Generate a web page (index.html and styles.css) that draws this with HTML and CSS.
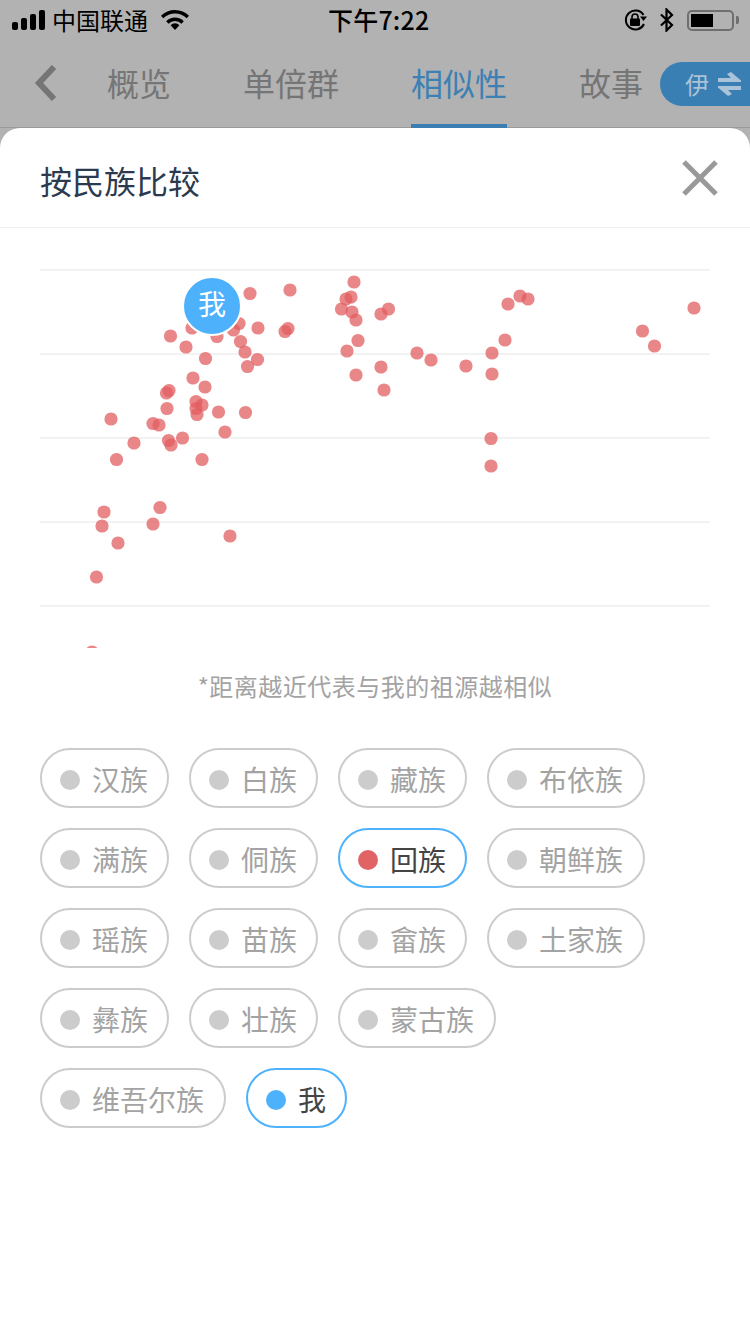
FILE: index.html
```html
<!DOCTYPE html>
<html lang="zh-CN">
<head>
    <meta charset="UTF-8">
    <title>相似性</title>
    <link rel="stylesheet" href="styles.css">
</head>
<body>
    <div class="page">
        <!-- Status bar -->
        <div class="status">
            <div class="status-left">
                <span class="signal"><i></i><i></i><i></i><i></i></span>
                <span class="carrier">中国联通</span>
                <svg class="wifi" width="28" height="20" viewBox="0 0 28 20">
                    <path d="M14 20 9.600 15.200a6.200 6.200 0 0 1 8.800 0Z"/>
                    <path d="M14 7.600c3.500 0 6.600 1.400 8.800 3.600l-2.300 2.500a9.200 9.200 0 0 0-13 0l-2.300-2.500A12.400 12.400 0 0 1 14 7.600Z"/>
                    <path d="M14 0c5.500 0 10.400 2.200 14 5.800l-2.300 2.500A16.600 16.600 0 0 0 14 3.400 16.600 16.600 0 0 0 2.300 8.300L0 5.800A19.800 19.800 0 0 1 14 0Z"/>
                </svg>
            </div>
            <div class="time">下午7:22</div>
            <div class="status-right">
                <svg class="lock" width="24" height="22" viewBox="0 0 24 22">
                    <path d="M19.500 6A9.500 9.500 0 1 0 20 15" fill="none" stroke="#000" stroke-width="2"/>
                    <path d="M16 7.500h7L19.500 12Z"/>
                    <rect x="6" y="9.500" width="10" height="7.500" rx="1"/>
                    <path d="M8 10V8a3 3 0 0 1 6 0v2" fill="none" stroke="#000" stroke-width="1.600"/>
                </svg>
                <svg class="bt" width="16" height="24" viewBox="0 0 16 24">
                    <path d="M2 6.500 13 17l-5.500 5.500v-21L13 7 2 17.500" fill="none" stroke="#000" stroke-width="2.200"/>
                </svg>
                <div class="battery"><span class="battery-fill"></span></div>
                <span class="battery-tip"></span>
            </div>
        </div>

        <!-- Tabs -->
        <div class="nav">
            <div class="back">
                <svg width="24" height="36" viewBox="0 0 24 36">
                    <path d="M20 2 5 18l15 16" fill="none" stroke="#757575" stroke-width="6"/>
                </svg>
            </div>
            <div class="tabs">
                <span class="tab">概览</span>
                <span class="tab">单倍群</span>
                <span class="tab active">相似性</span>
                <span class="tab">故事</span>
            </div>
            <div class="switch">
                <span>伊</span>
                <svg width="24" height="24" viewBox="0 0 24 24">
                    <path d="M0 6h13L9 2l4-2 10 8.500V10H0ZM23 14v4H10l4 4-4 2L0 15.500V14Z" fill="#aac3d8"/>
                </svg>
            </div>
        </div>

        <!-- Sheet -->
        <div class="sheet">
            <div class="sheet-head">
                <h1>按民族比较</h1>
                <svg class="close" width="38" height="38" viewBox="0 0 38 38">
                    <path d="M3 3l32 32M35 3 3 35" stroke="#999" stroke-width="5"/>
                </svg>
            </div>

            <div class="chart">
                <svg class="plot" width="750" height="420" viewBox="0 228 750 420">
                    <g class="grid">
                        <line x1="40" x2="710" y1="270" y2="270"/>
                        <line x1="40" x2="710" y1="354" y2="354"/>
                        <line x1="40" x2="710" y1="438" y2="438"/>
                        <line x1="40" x2="710" y1="522" y2="522"/>
                        <line x1="40" x2="710" y1="606" y2="606"/>
                    </g>
                    <g class="dots">
                        <circle cx="250" cy="293.500" r="6.600"/><circle cx="290" cy="290" r="6.600"/>
                        <circle cx="354" cy="282" r="6.600"/><circle cx="351" cy="297" r="6.600"/>
                        <circle cx="346" cy="299" r="6.600"/><circle cx="341.500" cy="309" r="6.600"/>
                        <circle cx="352" cy="312" r="6.600"/><circle cx="356" cy="320" r="6.600"/>
                        <circle cx="381" cy="314" r="6.600"/><circle cx="388.500" cy="309" r="6.600"/>
                        <circle cx="358" cy="340.500" r="6.600"/><circle cx="347" cy="351" r="6.600"/>
                        <circle cx="381" cy="367" r="6.600"/><circle cx="356" cy="375" r="6.600"/>
                        <circle cx="384" cy="390" r="6.600"/><circle cx="417" cy="353" r="6.600"/>
                        <circle cx="431" cy="360" r="6.600"/><circle cx="466" cy="366" r="6.600"/>
                        <circle cx="492" cy="353" r="6.600"/><circle cx="492" cy="374" r="6.600"/>
                        <circle cx="505" cy="340" r="6.600"/><circle cx="508" cy="304" r="6.600"/>
                        <circle cx="520" cy="296" r="6.600"/><circle cx="528" cy="299" r="6.600"/>
                        <circle cx="642.500" cy="331" r="6.600"/><circle cx="654.500" cy="346" r="6.600"/>
                        <circle cx="694" cy="308" r="6.600"/><circle cx="491" cy="438.500" r="6.600"/>
                        <circle cx="491" cy="466" r="6.600"/><circle cx="258" cy="328" r="6.600"/>
                        <circle cx="288" cy="328.500" r="6.600"/><circle cx="285" cy="331.500" r="6.600"/>
                        <circle cx="240.500" cy="341.500" r="6.600"/><circle cx="245" cy="352" r="6.600"/>
                        <circle cx="257.500" cy="359.500" r="6.600"/><circle cx="247.500" cy="366.500" r="6.600"/>
                        <circle cx="239" cy="323.500" r="6.600"/><circle cx="233.500" cy="330" r="6.600"/>
                        <circle cx="217" cy="336.500" r="6.600"/><circle cx="192" cy="328" r="6.600"/>
                        <circle cx="170.500" cy="336" r="6.600"/><circle cx="186" cy="347" r="6.600"/>
                        <circle cx="205.500" cy="358.500" r="6.600"/><circle cx="193" cy="378" r="6.600"/>
                        <circle cx="205" cy="387" r="6.600"/><circle cx="169" cy="390.500" r="6.600"/>
                        <circle cx="166.500" cy="393" r="6.600"/><circle cx="167" cy="408.500" r="6.600"/>
                        <circle cx="196" cy="401.500" r="6.600"/><circle cx="202" cy="405" r="6.600"/>
                        <circle cx="196" cy="408.500" r="6.600"/><circle cx="197" cy="414.500" r="6.600"/>
                        <circle cx="218.500" cy="412" r="6.600"/><circle cx="245.500" cy="412.500" r="6.600"/>
                        <circle cx="225" cy="432" r="6.600"/><circle cx="182.500" cy="438" r="6.600"/>
                        <circle cx="168.500" cy="440.500" r="6.600"/><circle cx="171" cy="445" r="6.600"/>
                        <circle cx="159" cy="425" r="6.600"/><circle cx="153" cy="423.500" r="6.600"/>
                        <circle cx="134" cy="443" r="6.600"/><circle cx="111" cy="419" r="6.600"/>
                        <circle cx="116.500" cy="459.500" r="6.600"/><circle cx="202" cy="459.500" r="6.600"/>
                        <circle cx="160" cy="507.500" r="6.600"/><circle cx="153" cy="524" r="6.600"/>
                        <circle cx="104" cy="512" r="6.600"/><circle cx="102" cy="526" r="6.600"/>
                        <circle cx="118" cy="543" r="6.600"/><circle cx="230" cy="536" r="6.600"/>
                        <circle cx="96.500" cy="577" r="6.600"/><circle cx="92" cy="652" r="6.600"/>
                    </g>
                </svg>
                <div class="me-pin">我</div>
            </div>

            <p class="note">*距离越近代表与我的祖源越相似</p>

            <!-- Legend -->
            <div class="tags">
                <span class="tag"><i class="dot"></i>汉族</span>
                <span class="tag"><i class="dot"></i>白族</span>
                <span class="tag"><i class="dot"></i>藏族</span>
                <span class="tag wide"><i class="dot"></i>布依族</span>
                <span class="tag"><i class="dot"></i>满族</span>
                <span class="tag"><i class="dot"></i>侗族</span>
                <span class="tag on"><i class="dot red"></i>回族</span>
                <span class="tag wide"><i class="dot"></i>朝鲜族</span>
                <span class="tag"><i class="dot"></i>瑶族</span>
                <span class="tag"><i class="dot"></i>苗族</span>
                <span class="tag"><i class="dot"></i>畲族</span>
                <span class="tag wide"><i class="dot"></i>土家族</span>
                <span class="tag"><i class="dot"></i>彝族</span>
                <span class="tag"><i class="dot"></i>壮族</span>
                <span class="tag wide"><i class="dot"></i>蒙古族</span>
                <span class="tag wide"><i class="dot"></i>维吾尔族</span>
                <span class="tag on"><i class="dot blue"></i>我</span>
            </div>
        </div>
    </div>
</body>
</html>
```

FILE: styles.css
```css
/* Page frame */
body {
    margin: 0;
    font-family: "Noto Sans CJK SC", "Noto Sans", sans-serif;
    background: #b2b2b2;
}
.page {
    width: 750px;
    height: 1334px;
    display: flex;
    flex-direction: column;
    overflow: hidden;
}

/* Status bar */
.status {
    height: 40px;
    display: grid;
    grid-template-columns: 328px auto 1fr;
    align-items: center;
    color: #000;
    flex-shrink: 0;
}
.status-left {
    display: flex;
    align-items: center;
    padding-left: 12px;
}
.signal {
    display: flex;
    align-items: flex-end;
    gap: 3px;
    height: 20px;
}
.signal i {
    width: 6px;
    border-radius: 2px;
    background: #000;
}
.signal i:nth-child(1) { height: 8px; }
.signal i:nth-child(2) { height: 12px; }
.signal i:nth-child(3) { height: 16px; }
.signal i:nth-child(4) { height: 20px; }
.carrier {
    font-size: 24px;
    margin-left: 7px;
    line-height: 40px;
}
.wifi {
    margin-left: 13px;
}
.time {
    font-size: 25px;
    font-weight: 500;
    letter-spacing: 0.2px;
    line-height: 38px;
    height: 40px;
}
.status-right {
    display: flex;
    align-items: center;
    justify-content: flex-end;
    padding-right: 11px;
}
.lock {
    margin-right: 11px;
}
.bt {
    margin-right: 12px;
}
.battery {
    width: 47px;
    height: 21px;
    box-sizing: border-box;
    border: 2px solid #6f6f6f;
    border-radius: 5px;
    padding: 2px;
}
.battery-fill {
    display: block;
    width: 22px;
    height: 100%;
    background: #000;
}
.battery-tip {
    width: 3px;
    height: 8px;
    margin-left: 2px;
    background: #6f6f6f;
    border-radius: 0 2px 2px 0;
}

/* Tabs */
.nav {
    height: 88px;
    flex-shrink: 0;
    box-sizing: border-box;
    display: flex;
    align-items: center;
    border-bottom: 1px solid #999;
}
.back {
    width: 107px;
    padding-left: 34px;
    margin-top: -2px;
    box-sizing: border-box;
    display: flex;
}
.tabs {
    display: flex;
    gap: 72px;
    height: 100%;
}
.tab {
    font-size: 32px;
    color: #757575;
    display: flex;
    align-items: center;
    box-sizing: border-box;
    height: 88px;
    border-bottom: 4px solid transparent;
}
.tab.active {
    color: #3c80b4;
    border-bottom-color: #3a7db1;
}
.switch {
    margin-left: auto;
    width: 90px;
    height: 44px;
    box-sizing: border-box;
    padding-left: 25px;
    background: #3a7fb3;
    border-radius: 22px 0 0 22px;
    display: flex;
    align-items: center;
    gap: 9px;
    color: #aac3d8;
    font-size: 24px;
}

/* Sheet */
.sheet {
    flex: 1;
    background: #fff;
    border-radius: 20px 20px 0 0;
}
.sheet-head {
    height: 100px;
    box-sizing: border-box;
    border-bottom: 1px solid #f0f0f0;
    display: flex;
    align-items: center;
    justify-content: space-between;
    padding: 0 31px 0 40px;
}
.sheet-head h1 {
    margin: 4px 0 0;
    font-size: 32px;
    font-weight: 400;
    color: #2b3a4e;
}
.chart {
    position: relative;
    height: 420px;
    overflow: hidden;
}
.plot {
    display: block;
}
.grid line {
    stroke: #f2f2f2;
    stroke-width: 2;
}
.dots circle {
    fill: #e25d60;
    opacity: 0.75;
}
.me-pin {
    position: absolute;
    left: 182px;
    top: 48px;
    width: 60px;
    height: 60px;
    box-sizing: border-box;
    border: 2px solid #fff;
    border-radius: 50%;
    background: #4db2fb;
    color: #fff;
    font-size: 28px;
    line-height: 50px;
    text-align: center;
}
.note {
    margin: 20px 0 0;
    height: 36px;
    font-size: 24px;
    line-height: 36px;
    color: #a3a3a3;
    text-align: center;
    letter-spacing: 0.5px;
}

/* Legend */
.tags {
    display: flex;
    flex-wrap: wrap;
    gap: 20px;
    width: 660px;
    margin: 44px 0 0 40px;
}
.tag {
    height: 60px;
    box-sizing: border-box;
    padding: 1px 19px 0 18px;
    border: 2px solid #ccc;
    border-radius: 30px;
    display: flex;
    align-items: center;
    gap: 12px;
    font-size: 28px;
    color: #a3a3a3;
}
.tag.wide {
    padding-right: 20px;
}
.tag.on {
    border-color: #4db2fb;
    color: #444;
}
.dot {
    width: 20px;
    height: 20px;
    margin-top: 3px;
    border-radius: 50%;
    background: #ccc;
}
.dot.red {
    background: #e26365;
}
.dot.blue {
    background: #4db2fb;
}
```
